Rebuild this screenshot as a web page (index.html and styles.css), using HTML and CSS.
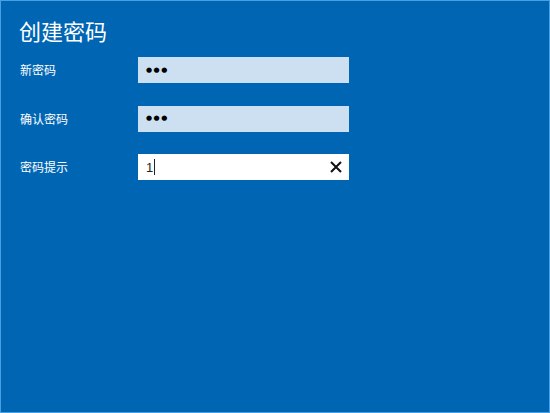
FILE: index.html
```html
<!DOCTYPE html>
<html lang="zh">
<head>
<meta charset="utf-8">
<link rel="stylesheet" href="styles.css">
</head>
<body>
<div class="screen">
  <h1 class="title">创建密码</h1>
  <div class="form">
    <div class="row">
      <span class="label">新密码</span>
      <div class="field field-dim"><span class="dots">●●●</span></div>
    </div>
    <div class="row">
      <span class="label">确认密码</span>
      <div class="field field-dim"><span class="dots">●●●</span></div>
    </div>
    <div class="row">
      <span class="label">密码提示</span>
      <div class="field field-active">
        <span class="value">1</span><span class="caret"></span>
        <svg class="clear" width="12" height="12" viewBox="0 0 12 12"><path d="M1 1L11 11M11 1L1 11" stroke="#111" stroke-width="2" fill="none"/></svg>
      </div>
    </div>
  </div>
</div>
</body>
</html>
```
FILE: styles.css
```css
html, body {
  margin: 0;
  padding: 0;
}
body {
  width: 550px;
  height: 413px;
  overflow: hidden;
  font-family: "Noto Sans CJK SC", "Microsoft YaHei", sans-serif;
}
.screen {
  box-sizing: border-box;
  width: 550px;
  height: 413px;
  background: #0066b4;
  border: 1px solid #4a9fe2;
  padding: 14px 0 0 18px;
  color: #fff;
}
.title {
  margin: 0;
  font-size: 22px;
  font-weight: 400;
  line-height: 30px;
}
.form {
  margin-top: 12px;
  display: flex;
  flex-direction: column;
  gap: 22.5px;
}
.row {
  display: flex;
  align-items: center;
  height: 26px;
}
.label {
  width: 118px;
  font-size: 12px;
  line-height: 16px;
  padding-left: 1px;
}
.field {
  box-sizing: border-box;
  width: 211px;
  height: 26px;
  display: flex;
  align-items: center;
  padding: 0 8px;
  color: #000;
}
.field-dim {
  background: #cce0f1;
}
.field-active {
  background: #fff;
}
.dots {
  font-family: "DejaVu Sans", sans-serif;
  font-size: 7px;
  letter-spacing: 1.5px;
  line-height: 1;
}
.value {
  font-family: "Liberation Sans", sans-serif;
  font-size: 13px;
  color: #222;
}
.caret {
  display: inline-block;
  width: 1px;
  height: 16px;
  background: #222;
  margin-left: 1px;
}
.clear {
  margin-left: auto;
  margin-right: -1px;
}
```
